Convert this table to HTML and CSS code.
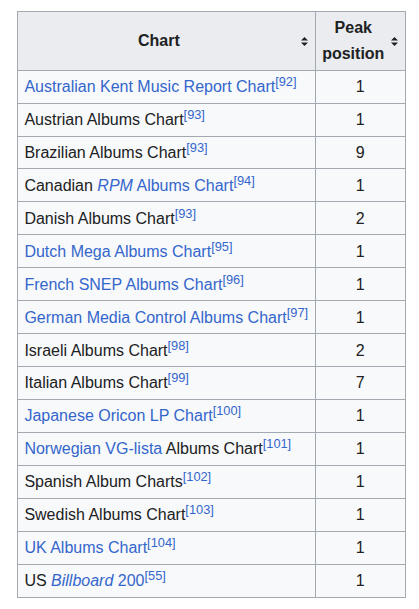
FILE: index.html
```html
<!DOCTYPE html>
<html>
<head>
<meta charset="utf-8">
<link rel="stylesheet" href="styles.css">
</head>
<body>
<table class="wikitable">
  <thead>
    <tr>
      <th class="col-chart"><div class="th-inner"><span class="th-label">Chart</span><svg class="sort" width="7" height="9" viewBox="0 0 7 9"><path d="M0 3.6 L3.5 0 L7 3.6 Z M0 5.4 L3.5 9 L7 5.4 Z" fill="#202122"/></svg></div></th>
      <th class="col-peak"><div class="th-inner"><span class="th-label">Peak position</span><svg class="sort" width="7" height="9" viewBox="0 0 7 9"><path d="M0 3.6 L3.5 0 L7 3.6 Z M0 5.4 L3.5 9 L7 5.4 Z" fill="#202122"/></svg></div></th>
    </tr>
  </thead>
  <tbody>
    <tr><td><a href="#">Australian Kent Music Report Chart</a><sup><a href="#">[92]</a></sup></td><td class="num">1</td></tr>
    <tr><td>Austrian Albums Chart<sup><a href="#">[93]</a></sup></td><td class="num">1</td></tr>
    <tr><td>Brazilian Albums Chart<sup><a href="#">[93]</a></sup></td><td class="num">9</td></tr>
    <tr><td>Canadian <a href="#"><i>RPM</i> Albums Chart</a><sup><a href="#">[94]</a></sup></td><td class="num">1</td></tr>
    <tr><td>Danish Albums Chart<sup><a href="#">[93]</a></sup></td><td class="num">2</td></tr>
    <tr><td><a href="#">Dutch Mega Albums Chart</a><sup><a href="#">[95]</a></sup></td><td class="num">1</td></tr>
    <tr><td><a href="#">French SNEP Albums Chart</a><sup><a href="#">[96]</a></sup></td><td class="num">1</td></tr>
    <tr><td><a href="#">German Media Control Albums Chart</a><sup><a href="#">[97]</a></sup></td><td class="num">1</td></tr>
    <tr><td>Israeli Albums Chart<sup><a href="#">[98]</a></sup></td><td class="num">2</td></tr>
    <tr><td>Italian Albums Chart<sup><a href="#">[99]</a></sup></td><td class="num">7</td></tr>
    <tr><td><a href="#">Japanese Oricon LP Chart</a><sup><a href="#">[100]</a></sup></td><td class="num">1</td></tr>
    <tr><td><a href="#">Norwegian VG-lista</a> Albums Chart<sup><a href="#">[101]</a></sup></td><td class="num">1</td></tr>
    <tr><td>Spanish Album Charts<sup><a href="#">[102]</a></sup></td><td class="num">1</td></tr>
    <tr><td>Swedish Albums Chart<sup><a href="#">[103]</a></sup></td><td class="num">1</td></tr>
    <tr><td><a href="#">UK Albums Chart</a><sup><a href="#">[104]</a></sup></td><td class="num">1</td></tr>
    <tr><td>US <a href="#"><i>Billboard</i> 200</a><sup><a href="#">[55]</a></sup></td><td class="num">1</td></tr>
  </tbody>
</table>
</body>
</html>
```
FILE: styles.css
```css
html, body {
  margin: 0;
  padding: 0;
  background: #ffffff;
}
body {
  padding: 11px 0 0 17px;
  font-family: "Liberation Sans", Arial, sans-serif;
  font-size: 16px;
  color: #202122;
}
.wikitable {
  border-collapse: collapse;
  background: #f8f9fa;
  border: 1px solid #a2a9b1;
  color: #202122;
}
.wikitable th,
.wikitable td {
  border: 1px solid #a2a9b1;
  padding: 3.2px 6.4px;
  line-height: 25.6px;
  height: 25.6px;
  vertical-align: middle;
}
.wikitable th {
  background: #eaecf0;
  font-weight: bold;
  text-align: center;
}
.col-chart {
  width: 284px;
  box-sizing: content-box;
}
.col-peak {
  width: 76px;
}
.th-inner {
  display: flex;
  align-items: center;
}
.th-label {
  flex: 1;
  text-align: center;
}
.col-chart .th-label {
  padding-right: 8px;
}
.col-peak .th-label {
  padding-right: 7px;
}
.sort {
  display: block;
  flex: none;
  margin-top: 1px;
}
.num {
  text-align: center;
}
a {
  color: #3366cc;
  text-decoration: none;
}
sup {
  font-size: 12.8px;
  line-height: 1;
  vertical-align: super;
}
```
